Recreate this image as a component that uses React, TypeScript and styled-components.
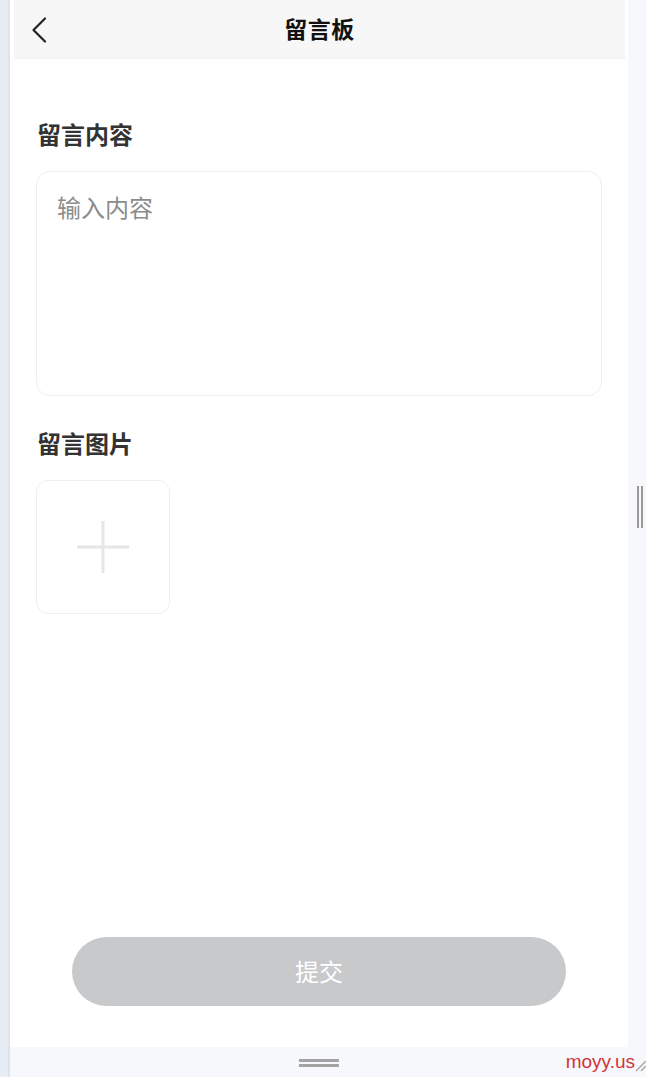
import React from 'react'
import styled, { createGlobalStyle } from 'styled-components'

const GlobalStyle = createGlobalStyle`
  html, body {
    margin: 0;
    padding: 0;
    background: #fff;
    font-family: "Noto Sans CJK SC", "Noto Sans", sans-serif;
  }
  * {
    box-sizing: border-box;
  }
`

const Screen = styled.div`
  display: flex;
  width: 646px;
  height: 1077px;
  overflow: hidden;
`

const LeftRail = styled.div`
  width: 10px;
  flex-shrink: 0;
  background: #e8ecf5;
  border-right: 2px solid #dfe3ea;
`

const Stage = styled.div`
  flex: 1;
  display: flex;
  flex-direction: column;
`

const Body = styled.div`
  flex: 1;
  display: flex;
`

const Phone = styled.main`
  width: 618px;
  display: flex;
  flex-direction: column;
  background: #fff;
`

const Header = styled.header`
  height: 59px;
  margin: 0 3px 0 4px;
  display: flex;
  align-items: center;
  justify-content: center;
  position: relative;
  background: #f7f7f7;
  border-bottom: 1px solid #f0f0f0;
`

const BackButton = styled.button`
  position: absolute;
  left: 15px;
  top: 16px;
  width: 20px;
  height: 27px;
  padding: 0;
  border: 0;
  background: none;
  display: flex;
  align-items: center;
  justify-content: center;
`

const Title = styled.h1`
  margin: -2px 0 0;
  font-size: 23px;
  font-weight: 700;
  color: #111;
  letter-spacing: 0.5px;
`

const Content = styled.section`
  flex: 1;
  display: flex;
  flex-direction: column;
  padding: 60px 26px 41px;
`

const Label = styled.h2<{ $gap?: number }>`
  margin: ${(p) => p.$gap ?? 0}px 0 22px 1px;
  font-size: 24px;
  line-height: 30px;
  font-weight: 700;
  color: #333;
`

const MessageInput = styled.textarea`
  width: 100%;
  height: 225px;
  padding: 20px 20px;
  border: 1px solid #efefef;
  border-radius: 14px;
  resize: none;
  outline: none;
  font-family: inherit;
  font-size: 24px;
  line-height: 30px;
  color: #333;

  &::placeholder {
    color: #8c8c8c;
  }
`

const UploadTile = styled.div`
  width: 134px;
  height: 134px;
  border: 1px solid #eeeeee;
  border-radius: 12px;
  display: flex;
  align-items: center;
  justify-content: center;
`

const SubmitButton = styled.button`
  margin: auto 36px 0;
  height: 69px;
  padding-bottom: 3px;
  border: 0;
  border-radius: 35px;
  background: #c8c9cb;
  color: #fff;
  font-family: inherit;
  font-size: 24px;
`

const RightRail = styled.div`
  flex: 1;
  display: flex;
  align-items: center;
  justify-content: flex-end;
  padding: 0 3px 34px 0;
  background: #f6f8fb;
`

const VerticalGrip = styled.div`
  width: 6px;
  height: 42px;
  border-left: 2px solid #9a9a9a;
  border-right: 2px solid #9a9a9a;
`

const BottomBar = styled.footer`
  height: 30px;
  position: relative;
  display: flex;
  align-items: center;
  padding-left: 289px;
  background: #f7f8fc;
`

const HorizontalGrip = styled.div`
  width: 40px;
  height: 8px;
  margin-top: 2px;
  border-top: 3px solid #a3a3a3;
  border-bottom: 3px solid #a3a3a3;
`

const Watermark = styled.div`
  position: absolute;
  right: 0;
  bottom: 5px;
  display: flex;
  align-items: flex-end;
  font-family: "Liberation Sans", Arial, sans-serif;
  font-size: 19px;
  line-height: 20px;
  color: #d0343a;
`

function BackIcon() {
  return (
    <svg width="16" height="26" viewBox="0 0 16 26" fill="none">
      <path d="M14 1.5 L2.5 13 L14 24.5" stroke="#222" strokeWidth="2.2" strokeLinecap="round" strokeLinejoin="round" />
    </svg>
  )
}

function PlusIcon() {
  return (
    <svg width="54" height="54" viewBox="0 0 54 54">
      <path d="M27 1 V53 M1 27 H53" stroke="#e6e6e6" strokeWidth="3" />
    </svg>
  )
}

function ResizeMark() {
  return (
    <svg width="11" height="14" viewBox="0 0 11 14">
      <path d="M1 13 L11 3 M6 13 L11 8" stroke="#a9a9a9" strokeWidth="1.5" />
    </svg>
  )
}

export default function App() {
  return (
    <>
      <GlobalStyle />
      <Screen>
        <LeftRail />
        <Stage>
          <Body>
            <Phone>
              <Header>
                <BackButton aria-label="返回">
                  <BackIcon />
                </BackButton>
                <Title>留言板</Title>
              </Header>
              <Content>
                <Label>留言内容</Label>
                <MessageInput placeholder="输入内容" />
                <Label $gap={32}>留言图片</Label>
                <UploadTile>
                  <PlusIcon />
                </UploadTile>
                <SubmitButton>提交</SubmitButton>
              </Content>
            </Phone>
            <RightRail>
              <VerticalGrip />
            </RightRail>
          </Body>
          <BottomBar>
            <HorizontalGrip />
            <Watermark>
              moyy.us
              <ResizeMark />
            </Watermark>
          </BottomBar>
        </Stage>
      </Screen>
    </>
  )
}
